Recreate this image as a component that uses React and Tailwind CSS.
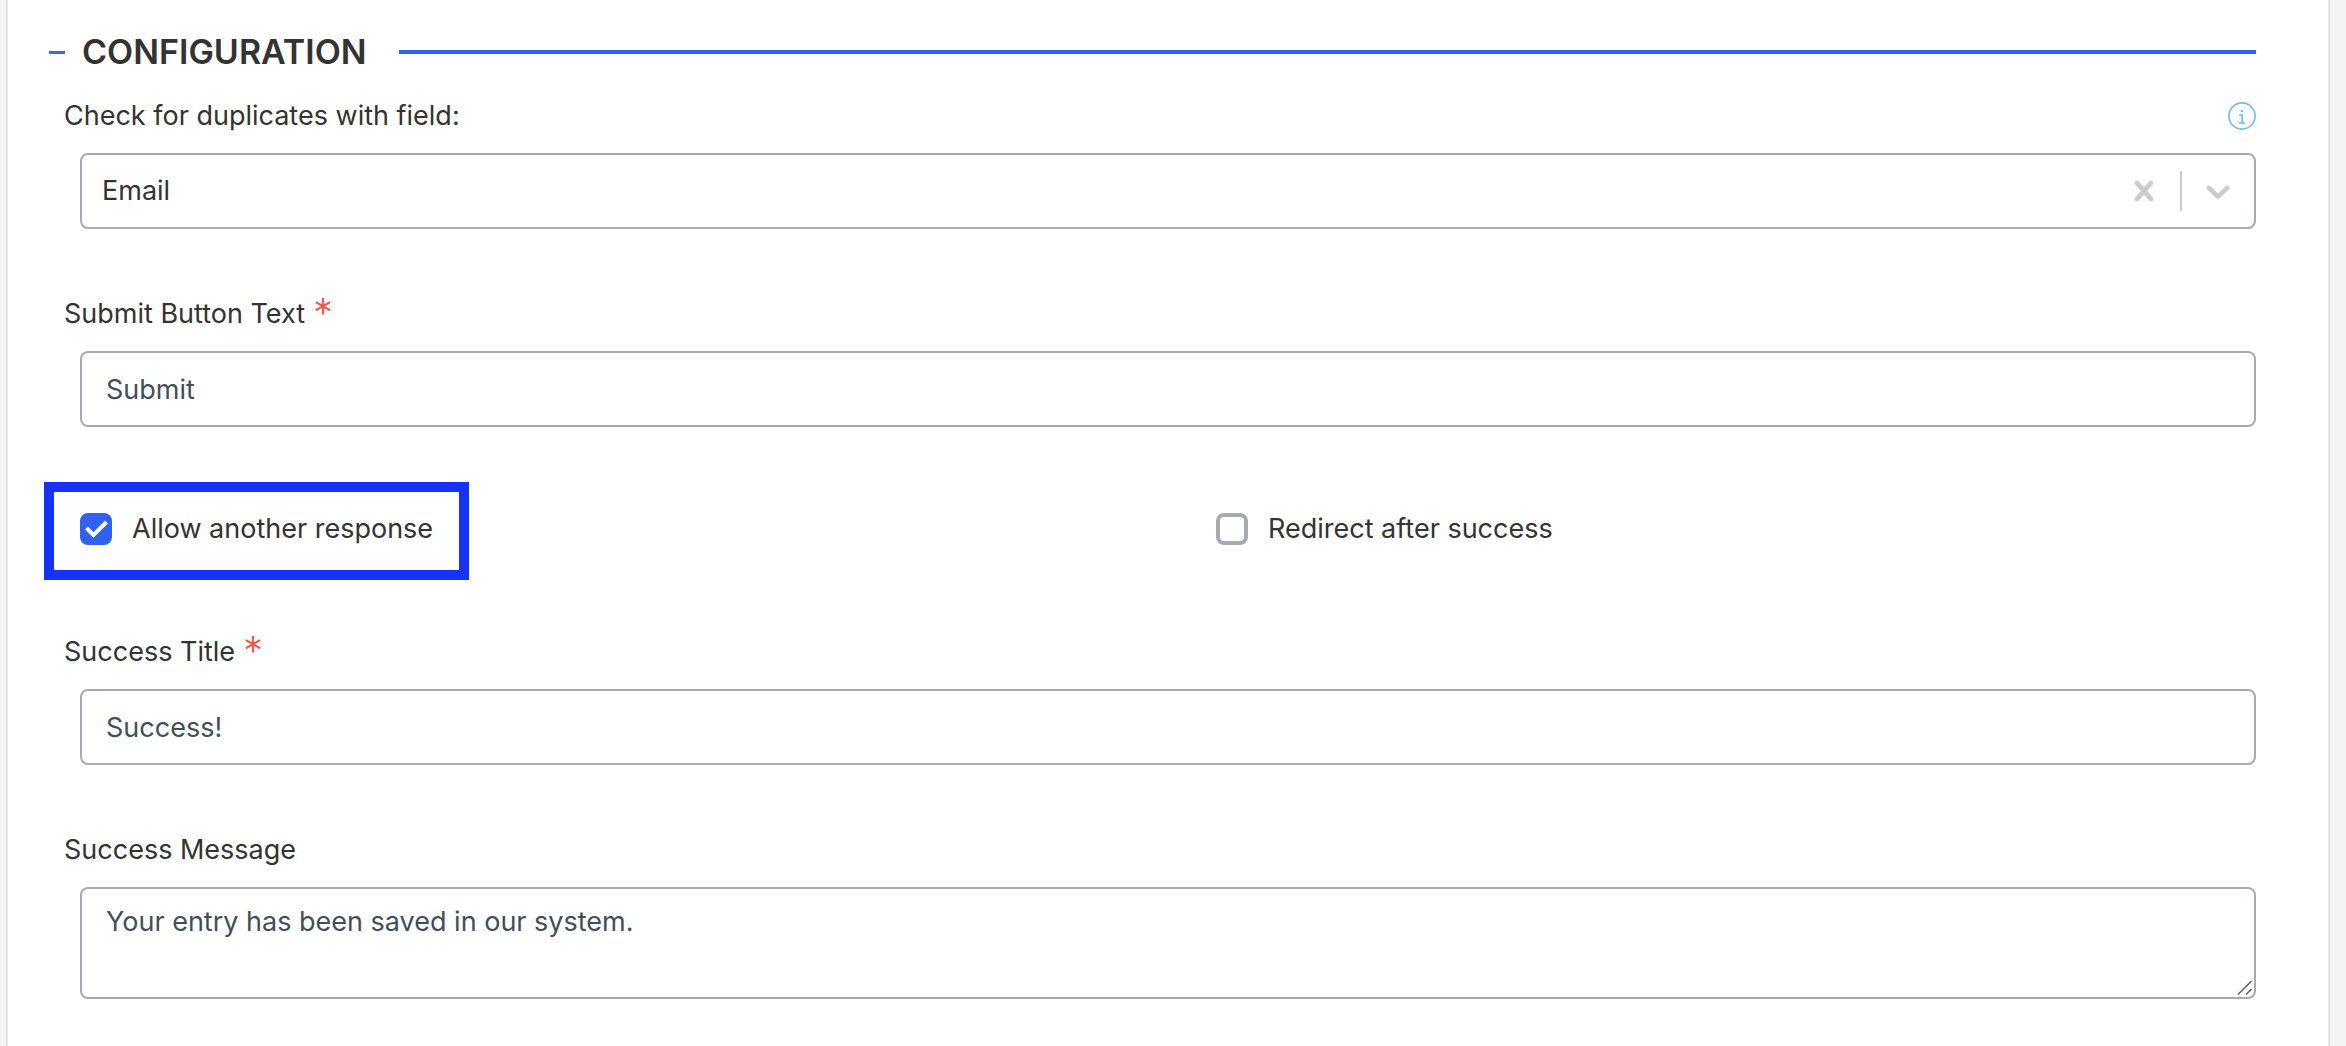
import React from "react";

const fieldBox =
  "block w-full rounded-lg border-2 border-[#a9a9b3] bg-white text-[27px] leading-[42px] text-[#3f4f5a] outline-none";

function Required() {
  return (
    <span aria-hidden="true" className="ml-2 align-[-4px] text-[40px] leading-none font-light text-[#f0564e]">
      *
    </span>
  );
}

function Field({ id, label, required, info, children }) {
  return (
    <div className="flex flex-col gap-4">
      <div className="flex h-[42px] items-center justify-between pl-4">
        <label htmlFor={id} className="leading-[42px]">
          {label}
          {required && <Required />}
        </label>
        {info}
      </div>
      <div className="pl-8">{children}</div>
    </div>
  );
}

function InfoButton() {
  return (
    <button type="button" aria-label="More information" className="text-[#72bdec]">
      <svg viewBox="0 0 28 28" className="size-7" fill="none" stroke="currentColor">
        <circle cx="14" cy="14" r="13.1" strokeWidth="1.7" />
        <circle cx="14" cy="9" r="1.3" fill="currentColor" stroke="none" />
        <path d="M11.2 13.2h3v8M10.8 21h6.6" strokeWidth="1.7" />
      </svg>
    </button>
  );
}

function Check({ id, label, defaultChecked, highlighted }) {
  return (
    <div className="relative flex w-fit items-center gap-5">
      <span className="grid size-8 place-items-center">
        <input
          id={id}
          type="checkbox"
          defaultChecked={defaultChecked}
          className="peer col-start-1 row-start-1 size-8 appearance-none rounded-lg border-4 border-[#a9a9b3] bg-white checked:border-[#3061f0] checked:bg-[#3061f0]"
        />
        <svg
          viewBox="0 0 32 32"
          className="pointer-events-none col-start-1 row-start-1 hidden size-8 peer-checked:block"
          fill="none"
          stroke="#fff"
          strokeWidth="4"
        >
          <path d="M6.5 15l7 7L26.5 9" />
        </svg>
      </span>
      <label htmlFor={id} className="leading-[42px]">{label}</label>
      {highlighted && (
        <span className="pointer-events-none absolute -top-[26px] -right-9 -bottom-[30px] -left-9 border-[10px] border-[#1433f7]" />
      )}
    </div>
  );
}

export default function App() {
  return (
    <div className="min-h-screen bg-[#f4f4f4] pr-4 pl-1.5 font-['Inter','Liberation_Sans',sans-serif] text-[27px] text-[#333]">
      <form className="min-h-screen border-x-2 border-[#e4e4ea] bg-white pt-7 pr-18 pb-12 pl-10">
        <div className="flex items-center">
          <button type="button" aria-label="Collapse section" className="flex h-12 w-[34px] items-center">
            <span className="ml-px h-[3px] w-4 bg-[#3b69f0]" />
          </button>
          <h2 className="text-[34px] leading-12 font-semibold">CONFIGURATION</h2>
          <div className="ml-8 h-1 flex-1 bg-[#3061f0]" />
        </div>

        <div className="mt-[19px] flex flex-col gap-16">
          <Field id="duplicates" label="Check for duplicates with field:" info={<InfoButton />}>
            <div className="flex h-[76px] items-center rounded-lg border-2 border-[#a9a9b3] text-[#ccc]">
              <select id="duplicates" defaultValue="Email" className="h-full flex-1 appearance-none bg-transparent pl-5 text-[#333] outline-none">
                <option>Email</option>
              </select>
              <button type="button" aria-label="Clear selection" className="p-4">
                <svg viewBox="0 0 20 20" className="size-10" fill="currentColor">
                  <path d="M14.348 14.849c-0.469 0.469-1.229 0.469-1.697 0l-2.651-3.030-2.651 3.029c-0.469 0.469-1.229 0.469-1.697 0-0.469-0.469-0.469-1.229 0-1.697l2.758-3.15-2.759-3.152c-0.469-0.469-0.469-1.228 0-1.697s1.228-0.469 1.697 0l2.652 3.031 2.651-3.031c0.469-0.469 1.228-0.469 1.697 0s0.469 1.229 0 1.697l-2.758 3.152 2.758 3.15c0.469 0.469 0.469 1.229 0 1.698z" />
                </svg>
              </button>
              <span className="h-10 w-0.5 bg-[#ccc]" />
              <button type="button" aria-label="Open list" className="p-4">
                <svg viewBox="0 0 20 20" className="size-10" fill="currentColor">
                  <path d="M4.516 7.548c0.436-0.446 1.043-0.481 1.576 0l3.908 3.747 3.908-3.747c0.533-0.481 1.141-0.446 1.574 0 0.436 0.445 0.408 1.197 0 1.615-0.406 0.418-4.695 4.502-4.695 4.502-0.217 0.223-0.502 0.335-0.787 0.335s-0.57-0.112-0.789-0.335c0 0-4.287-4.084-4.695-4.502s-0.436-1.17 0-1.615z" />
                </svg>
              </button>
            </div>
          </Field>

          <Field id="submit-text" label="Submit Button Text" required>
            <input id="submit-text" type="text" defaultValue="Submit" required className={`${fieldBox} h-[76px] px-6`} />
          </Field>

          <div className="my-[17px] grid grid-cols-2 gap-x-24 pl-8">
            <Check id="allow-another" label="Allow another response" defaultChecked highlighted />
            <Check id="redirect" label="Redirect after success" />
          </div>

          <Field id="success-title" label="Success Title" required>
            <input id="success-title" type="text" defaultValue="Success!" required className={`${fieldBox} h-[76px] px-6`} />
          </Field>

          <Field id="success-message" label="Success Message">
            <div className="relative">
              <textarea
                id="success-message"
                defaultValue="Your entry has been saved in our system."
                className={`${fieldBox} h-28 resize-y px-6 py-3 [&::-webkit-resizer]:bg-transparent`}
              />
              <svg
                viewBox="0 0 16 16"
                className="pointer-events-none absolute right-1 bottom-1 size-4"
                fill="none"
                stroke="#666"
                strokeWidth="1.6"
              >
                <path d="M2 15.5L15.5 2M10 15.5l5.5-5.5" />
              </svg>
            </div>
          </Field>
        </div>
      </form>
    </div>
  );
}
